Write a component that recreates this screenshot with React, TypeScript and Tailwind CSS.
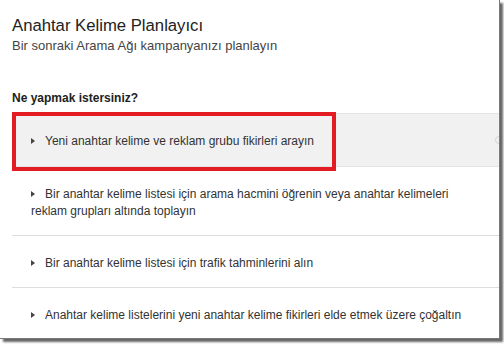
import React from "react";

const Tri = () => (
  <span className="inline-block align-middle mr-[10px] relative top-[-1px] w-0 h-0 border-t-[3.5px] border-b-[3.5px] border-l-[4px] border-t-transparent border-b-transparent border-l-[#444]" />
);

const rows = [
  "Bir anahtar kelime listesi için arama hacmini öğrenin veya anahtar kelimeleri reklam grupları altında toplayın",
  "Bir anahtar kelime listesi için trafik tahminlerini alın",
  "Anahtar kelime listelerini yeni anahtar kelime fikirleri elde etmek üzere çoğaltın",
];

export default function App() {
  return (
    <div className="w-[504px] h-[344px] bg-white font-['Liberation_Sans',Arial,sans-serif]">
      <div className="relative w-[500px] h-[339px] bg-white border-r border-b border-[#7a7a7a] shadow-[3px_3px_2px_rgba(0,0,0,0.6)] overflow-hidden">
        <div className="pl-3 pt-[16px]">
          <h1 className="text-[16.7px] leading-[20px] text-[#222]">Anahtar Kelime Planlayıcı</h1>
          <p className="mt-[2px] text-[13px] leading-[16px] text-[#444]">
            Bir sonraki Arama Ağı kampanyanızı planlayın
          </p>
          <p className="mt-[37px] text-[12px] leading-[15px] font-bold text-[#222]">Ne yapmak istersiniz?</p>
        </div>
        <div className="ml-3 mt-[7px] text-[12px] leading-[17px] text-[#333]">
          <div className="relative bg-[#f1f1f1] border-t border-b border-[#e3e3e3] px-[19px] pt-[19px] pb-[16px]">
            <Tri />
            Yeni anahtar kelime ve reklam grubu fikirleri arayın
            <span className="absolute right-[-4px] top-1/2 -translate-y-1/2 w-[8px] h-[8px] rounded-full border border-[#d6d6d6]" />
          </div>
          {rows.map((t, i) => (
            <div
              key={i}
              className={
                i < rows.length - 1
                  ? "border-b border-[#dddddd] px-[19px] pt-[19px] pb-[15px]"
                  : "px-[19px] pt-[19px] pb-[15px]"
              }
            >
              <Tri />
              {t}
            </div>
          ))}
        </div>
        <div className="absolute left-[12px] top-[112px] w-[324px] h-[59px] border-4 border-[#e31b23]" />
      </div>
    </div>
  );
}
